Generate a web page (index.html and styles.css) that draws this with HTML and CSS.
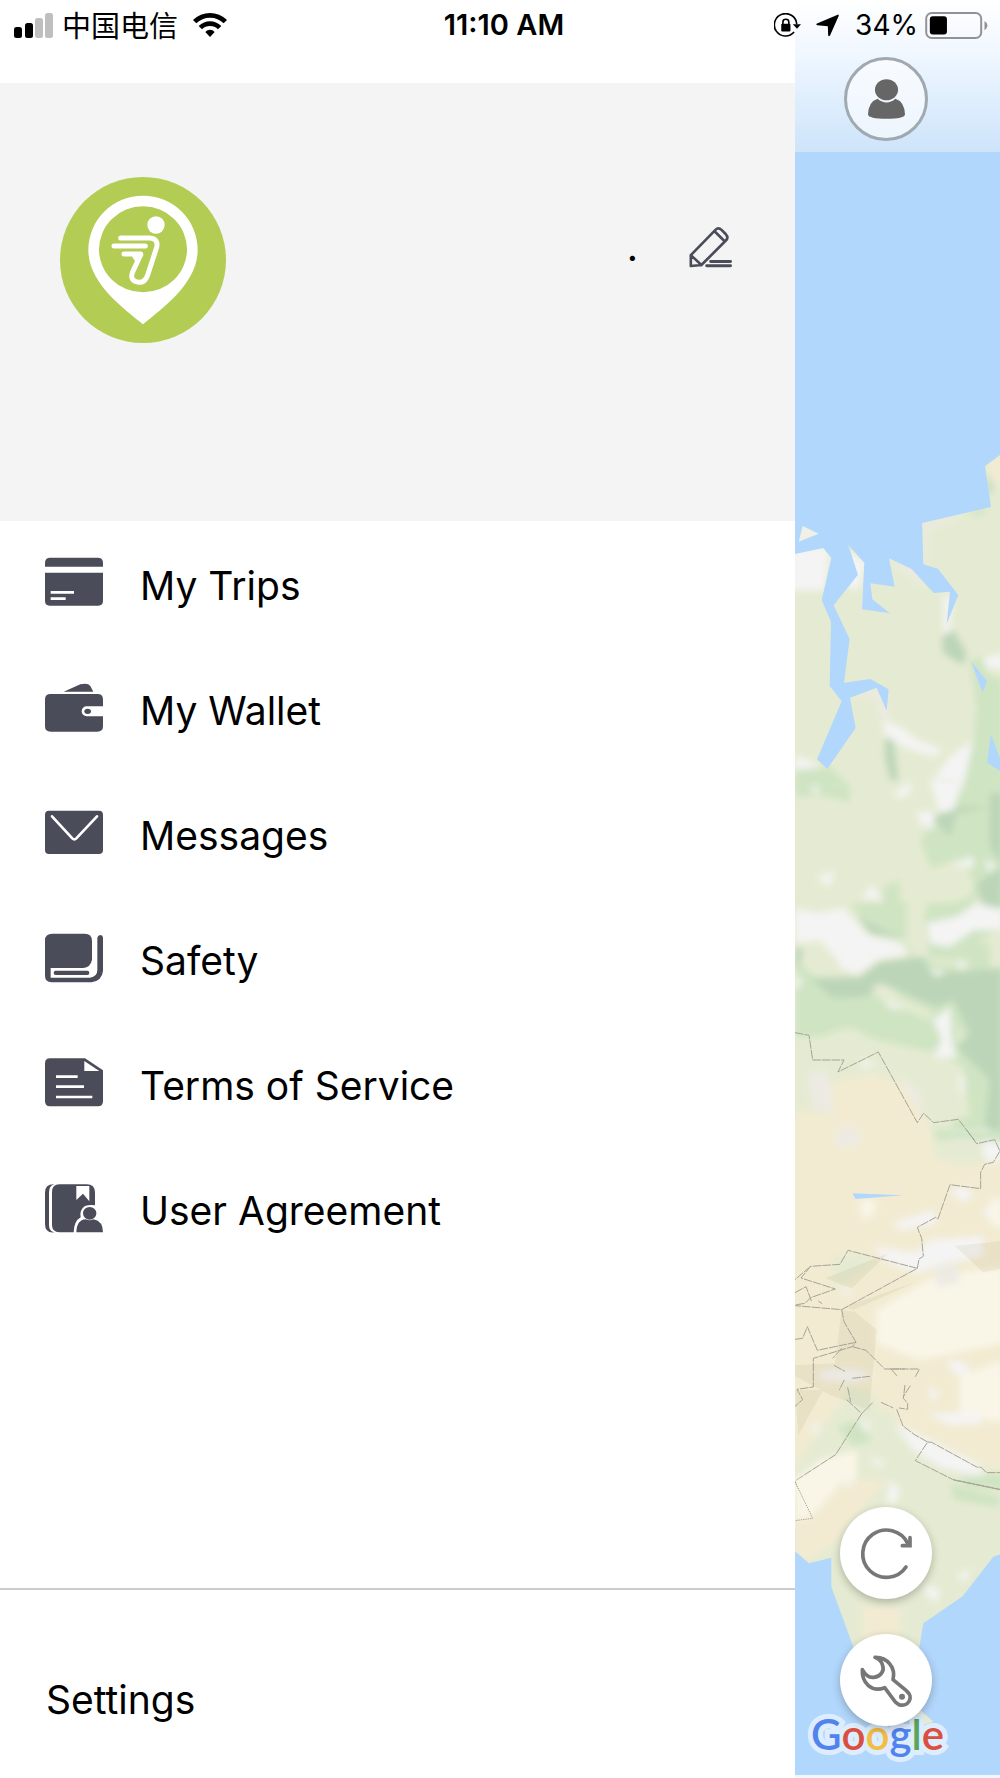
FILE: index.html
```html
<!DOCTYPE html>
<html lang="en">
<head>
<meta charset="utf-8">
<meta name="viewport" content="width=device-width, initial-scale=1">
<title>Menu</title>
<link rel="stylesheet" href="styles.css">
</head>
<body>
<div class="app">
  <header class="status">
    <div class="status-left">
      <svg class="signal" viewBox="0 0 39 25" aria-hidden="true"><rect y="14" width="8" height="11" rx="2.5"/><rect x="11" y="10" width="8" height="15" rx="2.5"/><rect class="off" x="21" y="5" width="8" height="20" rx="2.5"/><rect class="off" x="31" width="8" height="25" rx="2.5"/></svg>
      <span class="carrier" lang="zh-CN">中国电信</span>
      <svg class="wifi" viewBox="0 0 102 72" aria-hidden="true"><path d="M51 72 37 57Q43 50 51 50T65 57Z"/><path d="M17 39Q32 25 51 25T85 39L75 49Q65 39 51 39T27 49Z"/><path d="M0 21Q22 0 51 0T102 21L92 31Q75 14 51 14T10 31Z"/></svg>
    </div>
    <time class="clock">11:10 AM</time>
    <div class="status-right">
      <svg class="lock" viewBox="0 0 82 74" aria-hidden="true"><path class="ring" d="M61 57A34 34 0 1 1 69 33"/><path d="M57 33H82L70 47Z"/><rect x="22" y="32" width="28" height="23" rx="3"/><path class="shackle" d="M27 33V26Q27 18 36 18T45 26V33"/></svg>
      <svg class="arrow" viewBox="0 0 70 68" aria-hidden="true"><path d="M66 1Q70 0 69 5L43 64Q39 70 37 64L36 36 4 33Q-2 31 3 28Z"/></svg>
      <span>34%</span>
      <svg class="battery" viewBox="0 0 190 82" aria-hidden="true"><rect class="case" x="3" y="3" width="167" height="76" rx="17"/><rect x="14" y="13" width="52" height="55" rx="9"/><path class="cap" d="M180 27Q189 32 189 41T180 56Z"/></svg>
    </div>
  </header>

  <aside class="drawer">
    <section class="profile">
      <svg class="avatar" viewBox="59 51 498 498" role="img" aria-label="Profile picture">
        <circle cx="308" cy="300" r="249" fill="#b3cd54"/>
        <path d="M308 493C250 445 144 370 144 270A164 163 0 0 1 472 270C472 370 366 445 308 493Z" fill="#fff"/>
        <ellipse cx="308" cy="268" rx="132" ry="129" fill="#b3cd54"/>
        <circle cx="347" cy="195" r="26" fill="#fff"/>
        <g fill="none" stroke="#fff" stroke-width="15" stroke-linecap="round" stroke-linejoin="round"><path d="M241 234H328Q355 236 349 262L321 348Q313 368 296 367 268 364 276 338L301 284"/><path d="M221 258H315M251 282H301M282 287 289 297 301 284"/></g>
      </svg>
      <div class="identity">
        <span class="name">.</span>
        <button class="edit" type="button" aria-label="Edit profile">
          <svg viewBox="266 80 132 124" aria-hidden="true"><g fill="none" stroke="#4b4c5a" stroke-width="8" stroke-linejoin="round" stroke-linecap="round"><path d="M271 165 344 90Q354 80 363 88L377 102Q386 112 377 121L303 195 271 198ZM271 165 303 195M342 92 374 124"/><path stroke-width="9" d="M331 184H391M319 197H391"/></g></svg>
        </button>
      </div>
    </section>

    <nav class="menu" aria-label="Main">
      <a href="#trips"><svg viewBox="45 50 174 162" aria-hidden="true"><path d="M45 79V68Q45 52 61 52H203Q219 52 219 68V79Z"/><path d="M45 97H219V182Q219 196 205 196H59Q45 196 45 182Z"/><path class="cut" d="M62 156H132M62 175H107"/></svg>My Trips</a>
      <a href="#wallet"><svg viewBox="45 424 174 162" aria-hidden="true"><path d="M101 453 151 431Q174 425 181 436L190 453Z"/><path d="M62 460H202Q219 460 219 476V497H170A15 15 0 0 0 170 527H219V557Q219 573 202 573H62Q45 573 45 557V476Q45 460 62 460Z"/><ellipse cx="173" cy="512" rx="10" ry="8"/></svg>My Wallet</a>
      <a href="#messages"><svg viewBox="45 800 174 162" aria-hidden="true"><rect x="45" y="811" width="174" height="130" rx="12"/><path class="cut" d="M66 828 127 894Q133 900 139 894L201 828" stroke-linecap="round"/></svg>Messages</a>
      <a href="#safety"><svg viewBox="45 64 174 162" aria-hidden="true"><path d="M45 89Q45 69 67 69H164Q186 69 186 91V147Q182 169 160 172H62V201H180Q202 198 202 178V81Q204 74 211 73 219 74 219 81V181Q216 210 185 215H65Q45 213 45 196Z"/><rect x="71" y="180" width="107" height="13" rx="6"/></svg>Safety</a>
      <a href="#terms"><svg viewBox="45 440 174 162" aria-hidden="true"><path d="M60 444H165L219 480V573Q219 588 204 588H60Q45 588 45 573V459Q45 444 60 444Z"/><path d="M163 452V482H208Z" fill="#fff"/><path class="cut" d="M78 499H143M78 529H162M78 560H187"/></svg>Terms of Service</a>
      <a href="#agreement"><svg viewBox="45 814 174 162" aria-hidden="true"><path d="M73 821Q57 825 57 845V942Q57 962 73 965 45 968 45 940V846Q45 820 73 821Z"/><path d="M88 821H170Q195 821 195 846V884Q180 881 165 886 148 897 152 920 132 931 131 965H88Q66 965 66 943V845Q66 821 88 821Z"/><path d="M139 826H178V872L159 849 139 868Z" fill="#fff"/><ellipse cx="179" cy="908" rx="20" ry="19"/><path d="M139 965Q140 928 167 926 179 932 191 926 219 932 219 965Z"/></svg>User Agreement</a>
    </nav>

    <footer class="drawer-footer"><a href="#settings">Settings</a></footer>
  </aside>

  <main class="map-pane">
    <svg class="map" viewBox="0 0 205 1778" preserveAspectRatio="xMinYMin slice" aria-hidden="true">
      <defs>
        <filter id="soft" x="-20%" y="-20%" width="140%" height="140%"><feGaussianBlur stdDeviation="11"/></filter>
      </defs>
      <rect width="205" height="1778" fill="#e5ebd2"/>

      <!-- northern terrain -->
      <g transform="translate(-5 440) scale(.3333)">
        <g filter="url(#soft)">
          <path class="snow" d="M0 320H120L105 450H0ZM15 945 85 975V1000L15 985ZM175 330 230 370 205 450 170 440ZM280 840 330 860 385 900 455 930 435 950 350 925 285 885ZM430 1020 480 950 550 900 540 1030ZM460 460 485 470 480 590 460 590ZM580 655 640 640V690L590 680Z"/>
          <path class="green" d="M540 660 575 650 590 700 640 720V1040H520L550 900 560 800Z"/>
          <path class="forest" d="M455 590 490 570 530 640 520 675 460 640ZM285 895 310 900 325 1020H300L285 950ZM590 100 610 140 595 170Z"/>
          <path class="sand" d="M590 70 640 30V140L605 120Z"/>
          <path class="green" d="M15 990 120 980 180 1040H15ZM530 215 600 200 570 230Z"/>
          <path class="rim" d="M400 250 530 220 500 240 415 265 410 370H400ZM300 360 370 385 420 450 340 395ZM180 775 265 745 300 830 280 850 255 770Z"/>
        </g>
      </g>

      <!-- forest belt -->
      <g transform="translate(-5 780) scale(.3333)">
        <g filter="url(#soft)">
          <path class="green" d="M15 0H120L180 20V70L120 50 15 50ZM390 180 440 110 540 0H640V300L540 370 640 400H410V370L330 365V300L280 320V370H15V540L240 720 540 800 480 700 500 540 350 530 350 370H640V1080H480L490 1020 540 1010 520 860 440 810 260 780 180 740 90 770 20 760V370H200L240 430 350 480 400 600 640 560V440L570 480 520 560 420 550 400 400 540 350 560 290 500 240 420 260Z"/>
          <path class="green" d="M15 640H480L520 860 440 820 260 780 170 735 90 770H15ZM410 370H640V420H410ZM540 20H640V300H540ZM550 490H600V570H530Z"/>
          <path class="green" d="M180 370H350V480L240 450ZM400 180 480 130 600 80V230L500 240 430 265Z"/>
          <path class="forest" d="M60 595 210 590 270 545 400 530 420 580 640 565V1080H580L600 900 500 800 540 760 490 660 440 680 270 610 230 650 130 655ZM560 310 640 260V380H580ZM430 120 470 80H600V40H640V260L600 200V80L500 100 480 170ZM200 410 340 480 240 460ZM15 500 40 510 25 570 15 560Z"/>
          <path class="snow" d="M420 0H520L490 90 450 100ZM380 95H430V150L390 130ZM15 385 80 400 160 385 240 470 320 485 360 520 260 540 200 585 150 560 90 480 15 490ZM410 430 500 410 560 370 640 390V450L550 450 480 500 420 490ZM480 250 550 230V265ZM580 240 620 255 600 275ZM215 355 245 315 280 360ZM60 25 80 15 90 50ZM310 45 360 0V40L330 55ZM430 720 480 680 485 780 500 835 430 830 455 780ZM280 660 330 665 360 690 300 685ZM80 295 130 270 120 320ZM510 530 530 560 505 560ZM420 570 470 575 440 590ZM15 590 40 600 15 630ZM505 880 525 900 515 960ZM480 1060 600 1050V1080H480ZM210 840 260 850 220 865Z"/>
          <path class="land" d="M250 610 310 640 430 700 420 720 350 690 260 650ZM55 510 100 490 150 550 60 580ZM360 430H400V480H360Z"/>
          <path class="sand" d="M120 910 240 880 340 910 400 1000 430 1080H15V990L120 1000Z"/>
          <path class="rim" d="M50 880 110 870 120 930 130 1000 70 980ZM140 1040 210 1030 200 1080H140ZM330 880 390 940 400 1010 360 950Z"/>
        </g>
      </g>

      <!-- steppe, desert and mountains -->
      <g transform="translate(-5 1130) scale(.3333)">
        <g filter="url(#soft)">
          <path class="sand" d="M0 -20H410L440 90 540 100 640 60V1030L540 990 420 930 330 890 300 840 220 850 130 840 80 940 20 1000 0 1200Z"/>
          <path class="green" d="M430 0H640V50L540 30H440Z"/>
          <path class="land" d="M430 40 560 50 600 100 500 105 430 70ZM130 380 220 370 260 400 130 480ZM180 760 250 790 300 900 430 960 640 1050V1200H190L200 1080 100 1000 15 1010 70 920 150 830Z"/>
          <path class="pale" d="M260 540 430 440 640 410V640L390 690 260 640ZM600 210 640 200V300L600 280ZM510 740 640 690V880L510 850ZM15 1050 90 990 200 960V1080H15ZM210 210H255V250L215 270Z"/>
          <path class="snow" d="M580 30 640 40V80L610 100 580 80ZM310 280 430 240 440 280 330 300ZM250 350 380 370 420 330 580 320V380L460 400 380 430 280 390ZM90 720 190 715 250 735 190 760 90 750ZM480 180 530 170 550 200 515 215ZM470 690 530 700 540 740 490 730ZM410 770 450 790 430 815ZM410 850 560 850 580 880 480 885ZM310 880 420 930 560 1000 600 1050 450 1010 370 960ZM200 870 240 880 230 920ZM60 880 90 890 80 920ZM580 230 610 240 590 270ZM240 980 290 1000 260 1010ZM150 470 185 480 170 500Z"/>
          <path class="rim" d="M140 0H210V45L140 50ZM430 410 500 400 510 460 440 470Z"/>
          <path class="green" d="M140 890 200 870 250 930 190 950ZM510 1040 640 1030V1080L520 1070Z"/>
        </g>
        <path fill="#9e8c5a" opacity=".1" d="M155 540 195 545 260 600 238 840 120 795 15 738V706L135 700ZM105 445 295 370 185 475ZM495 348 640 333V415L580 427ZM165 530 380 455 190 540ZM15 780H100L25 915Z"/>
        <path class="water" d="M187 190 340 196 197 207Z"/>
        <path class="border" stroke-dasharray="26 3" d="M530 0 560 41 614 29 630 63 610 97 584 103 572 127V176L480 164 444 267 437 262 382 292 395 325 400 379 387 387 382 415 155 539 15 527M382 415 174 361 150 403 62 409 33 444 136 477 62 503 45 520 15 525M62 409 15 449M15 488 48 470 65 515M155 539 162 575 198 637 187 650 70 685V771L21 778 38 809 15 829M15 628 38 625 52 590 82 661 198 637M187 650 228 661 284 717H344M304 718 323 740M388 718 376 740M301 717H388M155 655 128 685M132 706 165 724M187 745 240 739M163 750 148 780M173 772 182 815M170 809 215 851 248 818M215 851 137 974 15 1053 25 1080M273 817 310 834M345 765 340 805 353 820V838L327 834M361 767 340 800M320 838 339 888 375 915 413 936 376 992 487 1048 630 1078M413 936 425 937 560 1011 573 1012 590 1028H640M85 513 96 521"/>
      </g>
      <g transform="translate(-5 780) scale(.3333)">
        <path class="border" stroke-dasharray="26 3" d="M15 758 57 766 68 840H162L144 876 265 816 382 1028 401 1000 431 1028 505 1018 553 1080"/>
      </g>

      <!-- southern peninsula -->
      <g transform="translate(-5 1480) scale(.3333)">
        <g filter="url(#soft)">
          <path class="sand" d="M15 0H290L220 80 130 190 40 250 15 220ZM215 380H330V500H220Z"/>
          <path class="pale" d="M15 0H160L110 60 60 110 15 120Z"/>
          <path class="snow" d="M160 0H185L175 30ZM300 0 330 30 310 80 290 60ZM400 310 450 330 440 370 410 345ZM505 285 545 265 520 310Z"/>
          <path class="green" d="M480 10 630 50V80L490 60Z"/>
        </g>
        <path class="border" stroke-dasharray="4 3" d="M15 5 68 115 15 122"/>
        <path class="border" stroke-dasharray="26 3" d="M490 0 630 29"/>
        <path class="water" d="M15 214 57 250 124 233V320L190 500 240 700 430 725 385 690 375 580 400 430 518 349 610 230 640 220V900H0V214Z"/>
        <path fill="#e5ebd2" d="M380 680 430 725 400 735 370 710Z"/>
      </g>

      <!-- arctic sea and inlets -->
      <path class="water" d="M0 0H205V455L190 466 196 507 127 523H0Z"/>
      <g transform="translate(-5 440) scale(.3333)">
        <path class="water" d="M15 230H396L400 373 444 386 505 465 470 552 480 455 431 459 365 387 297 355 314 440 241 430 247 478 300 520 216 508 223 368 175 316 204 404 131 496 179 597 162 728 241 717 296 748 290 812 260 743 180 773 197 864 112 987 81 958 155 784 119 738 123 545 95 480 124 354 100 324 15 342ZM543 663 591 724 578 758ZM603 883 632 960V994L591 968Z"/>
        <path d="M38 258 86 281 26 305Z" fill="#f0f0e6"/>
      </g>
      <path d="M0 1775H205V1778H0Z" fill="#f3f7fb"/>
    </svg>

    <div class="map-header">
      <button class="account" type="button" aria-label="Account">
        <svg viewBox="0 0 112 120" aria-hidden="true"><ellipse cx="56" cy="32" rx="35" ry="32"/><path d="M29 59Q56 82 83 59 111 68 112 107 110 120 56 120T0 107Q1 68 29 59Z"/></svg>
      </button>
    </div>
    <div class="google" data-text="Google" aria-label="Google"><span class="b">G</span><span class="r">o</span><span class="y">o</span><span class="b">g</span><span class="g">l</span><span class="r">e</span></div>
    <div class="fabs">
      <button type="button" aria-label="Refresh"><svg viewBox="150 81 276 276" aria-hidden="true"><path d="M348 261A71 71 0 1 1 353 190" stroke-linecap="round"/><path d="M360 173V197H337" stroke-linecap="round" stroke-linejoin="miter"/></svg></button>
      <button type="button" aria-label="Tools"><svg viewBox="150 462 276 276" aria-hidden="true"><path d="M255 532C292 531 318 563 309 599L349 632C374 651 354 682 327 674L316 666 284 623C245 638 215 609 217 569 228 589 239 594 252 592 272 590 284 572 278 557 276 545 270 538 255 532Z" stroke-linejoin="round"/><circle class="dot" cx="336" cy="650" r="9"/></svg></button>
    </div>
  </main>
</div>
</body>
</html>
```
FILE: styles.css
```css
* {
  box-sizing: border-box;
}

body {
  margin: 0;
  background: #fff;
  color: #000;
  font-family: Inter, "Noto Sans CJK SC", sans-serif;
  font-size: 39px;
  line-height: 48px;
}

a {
  color: inherit;
  text-decoration: none;
}

button {
  display: grid;
  place-items: center;
  margin: 0;
  padding: 0;
  border: 0;
  background: none;
}

svg {
  display: block;
  flex: none;
}

.app {
  position: relative;
  display: flex;
  min-height: 100vh;
}

/* Status bar, drawn over both the drawer and the map */
.status {
  position: absolute;
  z-index: 2;
  top: 0;
  left: 0;
  right: 0;
  display: grid;
  grid-template-columns: 1fr auto 1fr;
  align-items: center;
  height: 50px;
  padding: 0 12px 0 14px;
  font-size: 29px;
  line-height: 32px;
}

.status-left,
.status-right {
  display: flex;
  align-items: center;
}

.status-right {
  justify-content: flex-end;
}

.signal {
  width: 39px;
  height: 25px;
}

.signal .off {
  fill: #bfbfbf;
}

.carrier {
  margin: 0 15px 2px 9px;
  font-family: "Noto Sans CJK SC", sans-serif;
}

.wifi {
  width: 34px;
  height: 24px;
}

.clock {
  padding-left: 6px;
  font-weight: 600;
}

.lock {
  width: 27px;
  height: 25px;
  margin-right: 15px;
}

.lock .ring,
.lock .shackle {
  fill: none;
  stroke: #000;
  stroke-width: 5;
}

.arrow {
  width: 23px;
  height: 23px;
  margin-right: 16px;
}

.battery {
  width: 63px;
  height: 27px;
  margin-left: 7px;
}

.status-right span {
  font-size: 28px;
}

.battery .case {
  fill: none;
  stroke: #909296;
  stroke-width: 6;
}

.battery .cap {
  fill: #909296;
}

/* Drawer */
.drawer {
  display: flex;
  flex: 1;
  flex-direction: column;
  padding-top: 83px;
}

.profile {
  display: flex;
  justify-content: space-between;
  height: 438px;
  padding: 94px 62px 0 60px;
  background: #f4f4f4;
}

.avatar {
  width: 166px;
  height: 166px;
}

.identity {
  display: flex;
  align-items: center;
  gap: 51px;
  height: 140px;
}

.edit svg {
  width: 44px;
  height: 41px;
}

.menu {
  flex: 1;
  padding-top: 2px;
}

.menu a {
  display: flex;
  align-items: center;
  gap: 37px;
  height: 125px;
  padding: 0 45px;
}

.menu svg {
  width: 58px;
  height: 54px;
  margin-bottom: 4px;
  fill: #4b4c5a;
}

.menu .cut {
  fill: none;
  stroke: #fff;
  stroke-width: 8;
}

.drawer-footer {
  height: 190px;
  padding: 86px 46px 0;
  border-top: 2px solid #ccc;
}

/* Map */
.map-pane {
  position: relative;
  display: flex;
  flex: none;
  flex-direction: column;
  justify-content: space-between;
  width: 205px;
  overflow: hidden;
  background: #b2d7fc;
}

.map {
  position: absolute;
  inset: 0;
  width: 100%;
  height: 100%;
}

.water {
  fill: #b2d7fc;
}

.land {
  fill: #e5ebd2;
}

.green {
  fill: #cfe4c2;
}

.forest {
  fill: #bcd5b8;
}

.snow {
  fill: #f4f4f4;
}

.sand {
  fill: #f2ebd2;
}

.pale {
  fill: #f9f6e8;
}

.rim {
  fill: #edeae4;
}

.border {
  fill: none;
  stroke: #a5a396;
  stroke-width: 3;
}

.map-header {
  position: relative;
  height: 152px;
  padding: 57px 49px 0;
  background: linear-gradient(#fff, #f0f7ff 35%, #cde4fa);
}

.account {
  width: 84px;
  height: 84px;
  border: 3px solid #a0a8b0;
  border-radius: 50%;
  background: rgb(255 255 255 / 60%);
}

.account svg {
  width: 37px;
  height: 40px;
  fill: #666;
}

.fabs {
  position: relative;
  display: grid;
  gap: 35px;
  padding: 0 0 52px 45px;
}

.fabs button {
  width: 92px;
  height: 92px;
  border-radius: 50%;
  background: #fff;
  box-shadow: 0 3px 8px rgb(0 0 0 / 25%);
}

.fabs svg {
  width: 92px;
  height: 92px;
  fill: none;
  stroke: #777;
  stroke-width: 11;
}

.fabs .dot {
  fill: #777;
  stroke: none;
}

/* Map attribution, sits beneath the floating buttons */
.google {
  position: absolute;
  bottom: 20px;
  left: 16px;
  font-family: Lato, sans-serif;
  font-size: 42px;
  font-weight: 600;
  font-kerning: none;
}

.google::before {
  content: attr(data-text);
  position: absolute;
  -webkit-text-stroke: 10px #deedfd;
  color: #deedfd;
  stroke-linejoin: round;
}

.google span {
  position: relative;
}

.google .b {
  color: #5083ed;
}

.google .r {
  color: #d95040;
}

.google .y {
  color: #f2bd42;
}

.google .g {
  color: #58a55c;
}
```
